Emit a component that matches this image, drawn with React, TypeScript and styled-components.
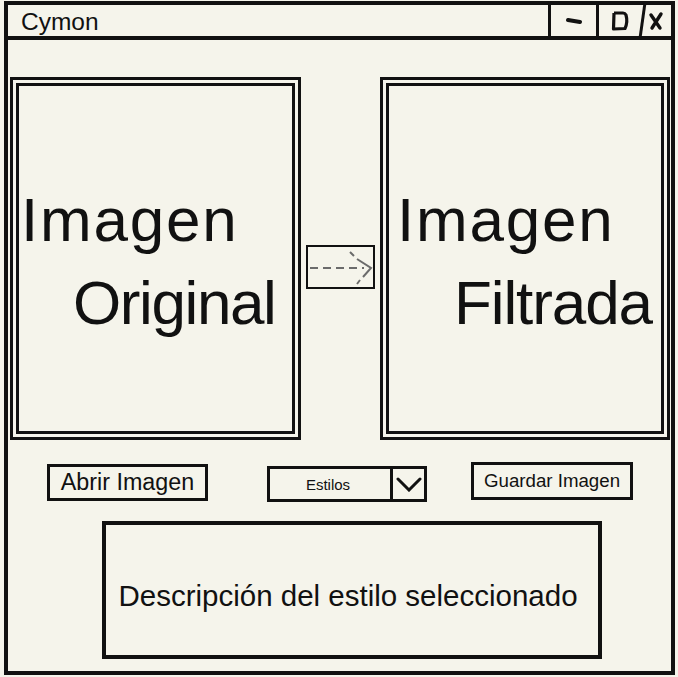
import * as React from "react"
import styled, { createGlobalStyle } from "styled-components"

const ink = "#111"
const paper = "#f5f4eb"

const Global = createGlobalStyle`
  html, body {
    margin: 0;
    padding: 0;
    background: ${paper};
  }
  body {
    font-family: "Liberation Sans", Arial, Helvetica, sans-serif;
    color: ${ink};
  }
`

const Window = styled.div`
  box-sizing: border-box;
  margin: 1px 0 0 4px;
  width: 671px;
  height: 674px;
  border: 4px solid ${ink};
  background: ${paper};
  display: flex;
  flex-direction: column;
`

const TitleBar = styled.div`
  height: 31px;
  border-bottom: 4px solid ${ink};
  display: flex;
  align-items: stretch;
`

const Title = styled.div`
  flex: 1;
  font-size: 24.5px;
  line-height: 28px;
  padding: 3px 0 0 13px;
`

const Controls = styled.div`
  display: flex;
  border-left: 3px solid ${ink};
`

const Control = styled.div<{ $w: number; $divider?: "straight" | "slant" }>`
  position: relative;
  width: ${(p) => p.$w}px;
  display: flex;
  align-items: center;
  justify-content: center;
  border-left: ${(p) => (p.$divider === "straight" ? `3px solid ${ink}` : "none")};

  &::before {
    content: "";
    display: ${(p) => (p.$divider === "slant" ? "block" : "none")};
    position: absolute;
    left: 0;
    top: -2px;
    bottom: -2px;
    width: 3px;
    background: ${ink};
    transform: skewX(-8deg);
  }
`

const Stage = styled.div`
  display: grid;
  grid-template-columns: 291px 1fr 290px;
  margin: 37px 1px 0 2px;
`

const Frame = styled.div`
  box-sizing: border-box;
  height: 363px;
  border: 3px solid ${ink};
  padding: 3px;
`

const FrameInner = styled.div`
  box-sizing: border-box;
  height: 100%;
  border: 3px solid ${ink};
  padding-top: 92px;
  overflow: hidden;
`

const FrameLine = styled.div<{ $indent: number; $track: number }>`
  font-size: 62px;
  line-height: 83px;
  white-space: nowrap;
  margin-left: ${(p) => p.$indent}px;
  letter-spacing: ${(p) => p.$track}px;
`

const ArrowBox = styled.div`
  justify-self: center;
  margin-top: 168px;
  box-sizing: border-box;
  width: 69px;
  height: 44px;
  border: 2px solid ${ink};
  display: flex;
`

const Toolbar = styled.div`
  display: flex;
  align-items: flex-start;
  margin-top: 22px;
`

const Button = styled.button<{ $w: number; $h: number; $left: number; $top: number; $size: number }>`
  box-sizing: border-box;
  width: ${(p) => p.$w}px;
  height: ${(p) => p.$h}px;
  margin: ${(p) => p.$top}px 0 0 ${(p) => p.$left}px;
  padding: 0;
  border: 3px solid ${ink};
  background: ${paper};
  color: ${ink};
  font-family: inherit;
  font-size: ${(p) => p.$size}px;
  display: flex;
  align-items: center;
  justify-content: center;
`

const Select = styled.div`
  box-sizing: border-box;
  width: 160px;
  height: 36px;
  margin: 4px 0 0 59px;
  border: 3px solid ${ink};
  display: flex;
`

const SelectLabel = styled.div`
  flex: 1;
  display: flex;
  align-items: center;
  justify-content: center;
  padding-right: 4px;
  font-size: 15px;
`

const SelectToggle = styled.div`
  width: 31px;
  border-left: 3px solid ${ink};
  display: flex;
  align-items: center;
  justify-content: center;
`

const Description = styled.div`
  box-sizing: border-box;
  width: 500px;
  height: 138px;
  margin: 19px 0 0 94px;
  border: 4px solid ${ink};
  padding: 12px 8px 0 0;
  display: flex;
  align-items: center;
  justify-content: center;
  font-size: 29.5px;
`

function DashIcon() {
  return (
    <svg width="16" height="8" viewBox="0 0 16 8">
      <path d="M2 3 L14 5" stroke={ink} strokeWidth="4" strokeLinecap="round" fill="none" />
    </svg>
  )
}

function SquareIcon() {
  return (
    <svg width="22" height="22" viewBox="0 0 22 22">
      <path
        d="M5 3 L4.5 19 L16 18.5 Q19 12 17 5 Q16 3 14 3 L5 3"
        stroke={ink}
        strokeWidth="3.2"
        strokeLinejoin="round"
        fill="none"
      />
    </svg>
  )
}

function CloseIcon() {
  return (
    <svg width="18" height="20" viewBox="0 0 18 20">
      <path d="M4 4 L13 17 M14 3 L5 17" stroke={ink} strokeWidth="3.4" strokeLinecap="round" fill="none" />
    </svg>
  )
}

function FlowArrow() {
  return (
    <svg width="65" height="40" viewBox="0 0 65 40">
      <path d="M2 21 L56 21" stroke="#6b6b6b" strokeWidth="2" strokeDasharray="8 5" fill="none" />
      <path d="M42 5 L46 9 M49 12 L63 21 L55 30 M52 33 L49 37" stroke="#6b6b6b" strokeWidth="2" fill="none" />
    </svg>
  )
}

function Chevron() {
  return (
    <svg width="26" height="15" viewBox="0 0 26 15">
      <path d="M2 2 L13 13 L24 2" stroke={ink} strokeWidth="3" strokeLinecap="round" fill="none" />
    </svg>
  )
}

export default function App() {
  return (
    <>
      <Global />
      <Window>
        <TitleBar>
          <Title>Cymon</Title>
          <Controls>
            <Control $w={45}>
              <DashIcon />
            </Control>
            <Control $w={42} $divider="straight">
              <SquareIcon />
            </Control>
            <Control $w={30} $divider="slant">
              <CloseIcon />
            </Control>
          </Controls>
        </TitleBar>

        <Stage>
          <Frame>
            <FrameInner>
              <FrameLine $indent={2} $track={1.8}>Imagen</FrameLine>
              <FrameLine $indent={54} $track={-1.4}>Original</FrameLine>
            </FrameInner>
          </Frame>
          <ArrowBox>
            <FlowArrow />
          </ArrowBox>
          <Frame>
            <FrameInner>
              <FrameLine $indent={8} $track={1.8}>Imagen</FrameLine>
              <FrameLine $indent={65} $track={-1.1}>Filtrada</FrameLine>
            </FrameInner>
          </Frame>
        </Stage>

        <Toolbar>
          <Button $w={161} $h={37} $left={39} $top={2} $size={23.3}>
            Abrir Imagen
          </Button>
          <Select>
            <SelectLabel>Estilos</SelectLabel>
            <SelectToggle>
              <Chevron />
            </SelectToggle>
          </Select>
          <Button $w={162} $h={38} $left={44} $top={0} $size={18.7}>
            Guardar Imagen
          </Button>
        </Toolbar>

        <Description>Descripción del estilo seleccionado</Description>
      </Window>
    </>
  )
}
